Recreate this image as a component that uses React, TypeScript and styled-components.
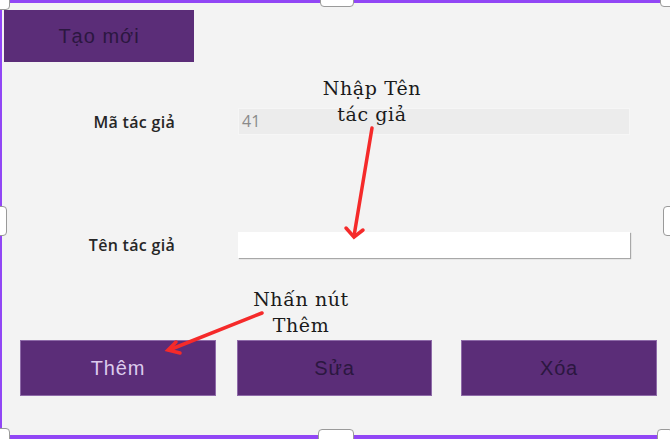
import React from "react";
import styled, { createGlobalStyle } from "styled-components";

const Global = createGlobalStyle`
  html, body { margin: 0; padding: 0; background: #f3f3f3; }
  body { width: 670px; height: 439px; overflow: hidden; }
`;

const Frame = styled.div`
  position: relative;
  box-sizing: border-box;
  width: 670px;
  height: 439px;
  background: #f3f3f3;
  border-top: 3px solid #9146f5;
  border-left: 2px solid #9146f5;
  border-bottom: 4px solid #9146f5;
  font-family: "Liberation Sans", Arial, sans-serif;
  display: flex;
  flex-direction: column;
`;

const PurpleButton = styled.button<{ $light?: boolean; $w: number; $h: number }>`
  flex-shrink: 0;
  box-sizing: border-box;
  width: ${(p) => p.$w}px;
  height: ${(p) => p.$h}px;
  background: #5b2d78;
  border: 1px solid #8e6aa8;
  color: ${(p) => (p.$light ? "#dccbed" : "#2b1740")};
  font-family: "Liberation Sans", Arial, sans-serif;
  font-size: 20px;
  letter-spacing: 0.8px;
  padding: 0;
  display: flex;
  align-items: center;
  justify-content: center;
`;

const TopBar = styled.div`
  padding: 7px 0 0 2px;
  height: 52px;
`;

const NewButton = styled(PurpleButton)`
  font-size: 20px;
  letter-spacing: 1px;
  border-color: #5b2d78;
`;

const Form = styled.div`
  display: flex;
  flex-direction: column;
`;

const FieldRow = styled.div<{ $top: number }>`
  display: flex;
  align-items: center;
  margin-top: ${(p) => p.$top}px;
`;

const Label = styled.label`
  width: 173px;
  text-align: right;
  font-family: "Open Sans", sans-serif;
  font-weight: 600;
  font-size: 16px;
  letter-spacing: 0.3px;
  color: #262626;
  margin-right: 63px;
`;

const Field = styled.div<{ $readonly?: boolean }>`
  box-sizing: border-box;
  width: 392px;
  height: ${(p) => (p.$readonly ? 27 : 26)}px;
  background: ${(p) => (p.$readonly ? "#ececec" : "#ffffff")};
  border: ${(p) => (p.$readonly ? "1px solid #f6f6f6" : "none")};
  box-shadow: ${(p) => (p.$readonly ? "none" : "1px 1px 1px #a8a8a8")};
  font-family: "Open Sans", sans-serif;
  font-size: 16px;
  line-height: 22px;
  color: #8a8a8a;
  padding: 1px 0 0 3px;
`;

const ButtonRow = styled.div`
  display: flex;
  margin-top: 82px;
  padding-left: 18px;
`;

const Spacer = styled.div<{ $w: number }>`
  flex-shrink: 0;
  width: ${(p) => p.$w}px;
`;

const Note = styled.div<{ $x: number; $y: number; $w: number }>`
  position: absolute;
  left: ${(p) => p.$x}px;
  top: ${(p) => p.$y}px;
  width: ${(p) => p.$w}px;
  text-align: center;
  font-family: "DejaVu Serif", "Liberation Serif", serif;
  font-size: 19px;
  line-height: 26px;
  color: #1a1a1a;
  letter-spacing: 0.6px;
`;

const Overlay = styled.svg`
  position: absolute;
  left: -2px;
  top: -3px;
  pointer-events: none;
`;

const Handle = styled.div<{ $x: number; $y: number; $w: number; $h: number }>`
  position: absolute;
  left: ${(p) => p.$x}px;
  top: ${(p) => p.$y}px;
  width: ${(p) => p.$w}px;
  height: ${(p) => p.$h}px;
  box-sizing: border-box;
  background: #ffffff;
  border: 1px solid #9a9a9a;
  border-radius: 4px;
`;

export default function App() {
  return (
    <>
      <Global />
      <Frame>
        <TopBar>
          <NewButton $w={190} $h={52}>Tạo mới</NewButton>
        </TopBar>
        <Form>
          <FieldRow $top={46}>
            <Label>Mã tác giả</Label>
            <Field $readonly>41</Field>
          </FieldRow>
          <FieldRow $top={97}>
            <Label>Tên tác giả</Label>
            <Field />
          </FieldRow>
        </Form>
        <ButtonRow>
          <PurpleButton $light $w={196} $h={56}>Thêm</PurpleButton>
          <Spacer $w={21} />
          <PurpleButton $w={195} $h={56}>Sửa</PurpleButton>
          <Spacer $w={29} />
          <PurpleButton $w={196} $h={56}>Xóa</PurpleButton>
        </ButtonRow>

        <Note $x={290} $y={72} $w={160}>
          Nhập Tên
          <br />
          tác giả
        </Note>
        <Note $x={219} $y={283} $w={160}>
          Nhấn nút
          <br />
          Thêm
        </Note>

        <Overlay width="670" height="439" viewBox="0 0 670 439">
          <g stroke="#f52a2a" strokeWidth="3.5" strokeLinecap="round" fill="none">
            <line x1="372" y1="128" x2="354" y2="236" />
            <polyline points="346,228 354,237 363,230" />
            <line x1="262" y1="313" x2="169" y2="350" />
            <polyline points="176,342 168,350 180,353" />
          </g>
        </Overlay>

        <Handle $x={-8} $y={-9} $w={16} $h={16} />
        <Handle $x={318} $y={-10} $w={34} $h={14} />
        <Handle $x={658} $y={-10} $w={16} $h={14} />
        <Handle $x={-8} $y={203} $w={13} $h={30} />
        <Handle $x={661} $y={203} $w={14} $h={30} />
        <Handle $x={-8} $y={425} $w={16} $h={16} />
        <Handle $x={316} $y={426} $w={36} $h={14} />
        <Handle $x={655} $y={426} $w={16} $h={16} />
      </Frame>
    </>
  );
}
